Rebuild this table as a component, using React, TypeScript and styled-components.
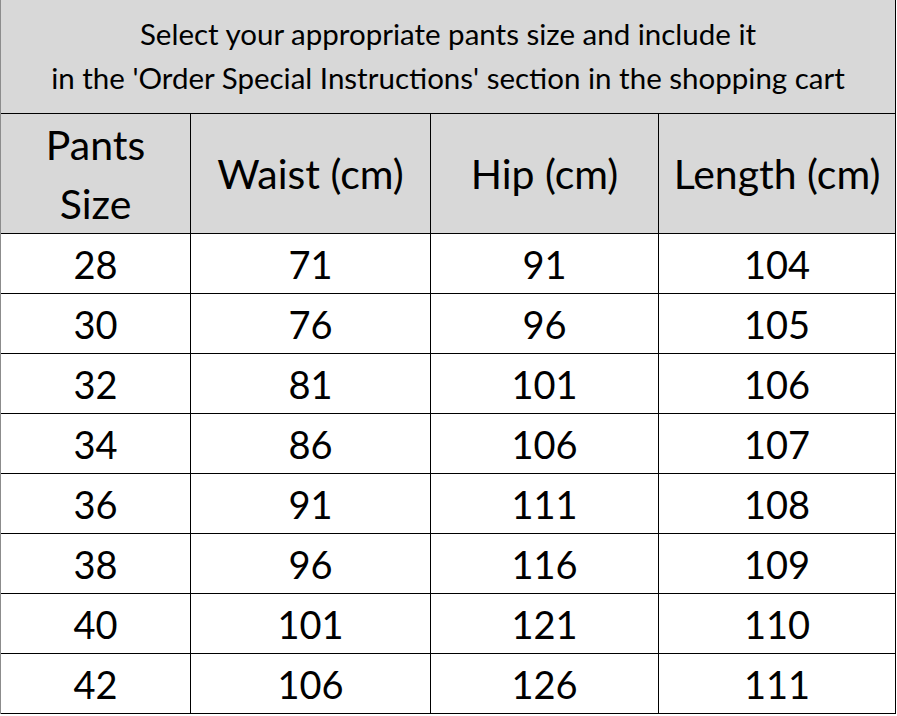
import React from 'react';
import styled, { createGlobalStyle } from 'styled-components';

const GlobalStyle = createGlobalStyle`
    body {
        margin: 0;
        background: #ffffff;
        font-family: Lato, "Liberation Sans", sans-serif;
        color: #000;
    }
`;

const Chart = styled.div`
    width: 896px;
    display: grid;
    grid-template-columns: 190px 240px 228px 237px;
    border-left: 1px solid #8c8c8c;
`;

const Title = styled.div`
    grid-column: 1 / -1;
    height: 114px;
    background: #d8d8d8;
    border-right: 1px solid #000;
    border-bottom: 1px solid #000;
    display: flex;
    flex-direction: column;
    justify-content: center;
    align-items: center;
    font-size: 29.5px;
    line-height: 44px;
    padding-bottom: 2px;
    box-sizing: border-box;
`;

const Cell = styled.div<{ head?: boolean }>`
    height: ${({ head }) => (head ? '120px' : '60px')};
    box-sizing: border-box;
    background: ${({ head }) => (head ? '#d8d8d8' : '#ffffff')};
    border-right: 1px solid #000;
    border-bottom: 1px solid #000;
    display: flex;
    flex-direction: column;
    justify-content: center;
    align-items: center;
    font-size: ${({ head }) => (head ? '41px' : '38px')};
    line-height: ${({ head }) => (head ? '59px' : '44px')};
    padding-top: ${({ head }) => (head ? '0' : '1px')};
    text-align: center;
`;

const headers = ['Pants\nSize', 'Waist (cm)', 'Hip (cm)', 'Length (cm)'];

const sizes = [
    [28, 71, 91, 104],
    [30, 76, 96, 105],
    [32, 81, 101, 106],
    [34, 86, 106, 107],
    [36, 91, 111, 108],
    [38, 96, 116, 109],
    [40, 101, 121, 110],
    [42, 106, 126, 111]
];

const App: React.FC = () => {
    return (
        <>
            <GlobalStyle />
            <Chart>
                <Title>
                    <span>Select your appropriate pants size and include it</span>
                    <span>in the 'Order Special Instructions' section in the shopping cart</span>
                </Title>
                {headers.map((h, i) => (
                    <Cell head key={i}>
                        {h.split('\n').map((line, j) => (
                            <span key={j}>{line}</span>
                        ))}
                    </Cell>
                ))}
                {sizes.map((row, r) =>
                    row.map((v, c) => <Cell key={r + '-' + c}>{v}</Cell>)
                )}
            </Chart>
        </>
    );
};

export default App;
